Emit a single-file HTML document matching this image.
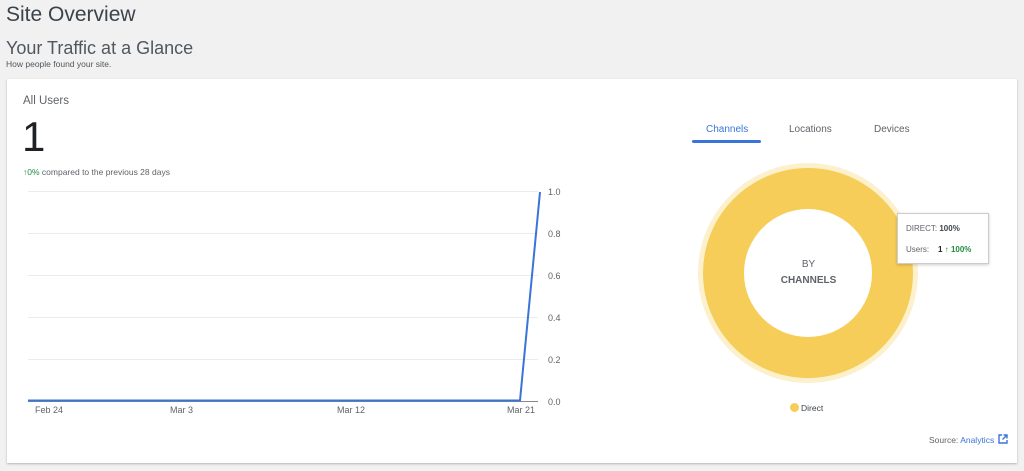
<!DOCTYPE html>
<html><head><meta charset="utf-8"><style>
*{margin:0;padding:0;box-sizing:border-box}
body{width:1024px;height:471px;background:#f1f1f1;font-family:"Liberation Sans",sans-serif;position:relative;overflow:hidden;color:#3c434a}
.a{position:absolute;white-space:nowrap}
.card{position:absolute;left:7px;top:79px;width:1010px;height:384px;background:#fff;box-shadow:0 1px 2px rgba(0,0,0,.25)}
.gl{position:absolute;left:28px;width:510px;height:1px;background:#ebebeb}
.yl{position:absolute;left:548px;font-size:9px;color:#5f6368}
.xl{position:absolute;top:405px;font-size:9px;color:#5f6368}
</style></head><body>
<div class="a" style="left:6px;top:3px;font-size:21px;color:#3c434a">Site Overview</div>
<div class="a" style="left:6px;top:38px;font-size:18px;color:#50575e">Your Traffic at a Glance</div>
<div class="a" style="left:6px;top:59px;font-size:8.5px;color:#50575e">How people found your site.</div>
<div class="card"></div>
<div class="a" style="left:23px;top:95px;font-size:11.5px;color:#5f6368">All Users</div>
<div class="a" style="left:22px;top:113px;font-size:42px;color:#202124;font-weight:300">1</div>
<div class="a" style="left:23px;top:167px;font-size:8.5px;color:#5f6368"><span style="color:#1e8e3e">↑0%</span> compared to the previous 28 days</div>
<div class="gl" style="top:191px"></div>
<div class="gl" style="top:233px"></div>
<div class="gl" style="top:275px"></div>
<div class="gl" style="top:317px"></div>
<div class="gl" style="top:359px"></div>
<div class="gl" style="top:401px;background:#888"></div>
<div class="yl" style="top:187px">1.0</div>
<div class="yl" style="top:229px">0.8</div>
<div class="yl" style="top:271px">0.6</div>
<div class="yl" style="top:313px">0.4</div>
<div class="yl" style="top:355px">0.2</div>
<div class="yl" style="top:397px">0.0</div>
<div class="xl" style="left:35px">Feb 24</div>
<div class="xl" style="left:170px">Mar 3</div>
<div class="xl" style="left:337px">Mar 12</div>
<div class="xl" style="left:507px">Mar 21</div>
<svg class="a" style="left:0;top:0" width="1024" height="471"><polyline points="28,400.5 520,400.5 540,192" fill="none" stroke="#3a74d9" stroke-width="2"/></svg>
<div class="a" style="left:706px;top:124px;font-size:10px;color:#3a74d9">Channels</div>
<div class="a" style="left:692px;top:140px;width:69px;height:3px;background:#3a74d9;border-radius:2px"></div>
<div class="a" style="left:789px;top:124px;font-size:10px;color:#5f6368">Locations</div>
<div class="a" style="left:874px;top:124px;font-size:10px;color:#5f6368">Devices</div>
<svg class="a" style="left:0;top:0" width="1024" height="471">
<circle cx="808" cy="273" r="110" fill="#fdf0cd"/>
<circle cx="808" cy="273" r="105" fill="#f6cd58"/>
<circle cx="808" cy="273" r="64" fill="#fff"/>
</svg>
<div class="a" style="left:780px;top:259px;width:57px;text-align:center;font-size:10px;color:#5f6368">BY</div>
<div class="a" style="left:770px;top:275px;width:77px;text-align:center;font-size:10px;font-weight:bold;color:#5f6368">CHANNELS</div>
<div class="a" style="left:897px;top:213px;width:92px;height:51px;background:#fff;border:1px solid #ccc;box-shadow:0 1px 3px rgba(0,0,0,.2)"></div>
<div class="a" style="left:906px;top:224px;font-size:8px;color:#5f6368">DIRECT: <b style="color:#3c434a">100%</b></div>
<div class="a" style="left:906px;top:245px;font-size:8px;color:#5f6368">Users:&nbsp;&nbsp;&nbsp;&nbsp;<b style="color:#202124">1</b> <span style="color:#1e8e3e">↑ <b>100%</b></span></div>
<div class="a" style="left:790px;top:403px;width:9px;height:9px;border-radius:50%;background:#f6cd58"></div>
<div class="a" style="left:801px;top:403px;font-size:8.5px;color:#3c434a">Direct</div>
<div class="a" style="left:929px;top:435px;font-size:8.5px;color:#5f6368">Source: <span style="color:#3a74d9">Analytics</span></div>
<svg class="a" style="left:998px;top:434px" width="10" height="10" viewBox="0 0 10 10"><path d="M4 1H1v8h8V6" fill="none" stroke="#3a74d9" stroke-width="1.4"/><path d="M5.5 1H9v3.5M9 1L4.5 5.5" fill="none" stroke="#3a74d9" stroke-width="1.4"/></svg>
</body></html>
